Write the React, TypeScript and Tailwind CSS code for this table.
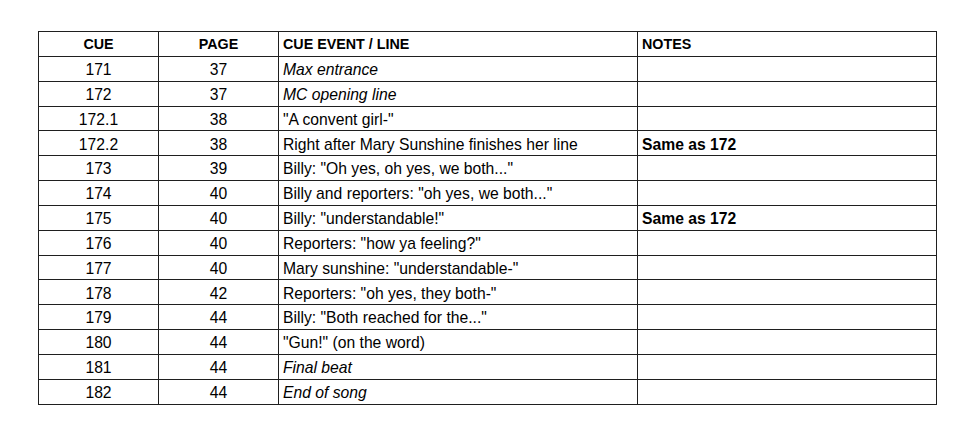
import React from "react";

type Row = { cue: string; page: string; event: string; italic?: boolean; notes?: string };

const rows: Row[] = [
  { cue: "171", page: "37", event: "Max entrance", italic: true },
  { cue: "172", page: "37", event: "MC opening line", italic: true },
  { cue: "172.1", page: "38", event: '"A convent girl-"' },
  { cue: "172.2", page: "38", event: "Right after Mary Sunshine finishes her line", notes: "Same as 172" },
  { cue: "173", page: "39", event: 'Billy: "Oh yes, oh yes, we both..."' },
  { cue: "174", page: "40", event: 'Billy and reporters: "oh yes, we both..."' },
  { cue: "175", page: "40", event: 'Billy: "understandable!"', notes: "Same as 172" },
  { cue: "176", page: "40", event: 'Reporters: "how ya feeling?"' },
  { cue: "177", page: "40", event: 'Mary sunshine: "understandable-"' },
  { cue: "178", page: "42", event: 'Reporters: "oh yes, they both-"' },
  { cue: "179", page: "44", event: 'Billy: "Both reached for the..."' },
  { cue: "180", page: "44", event: '"Gun!" (on the word)' },
  { cue: "181", page: "44", event: "Final beat", italic: true },
  { cue: "182", page: "44", event: "End of song", italic: true },
];

const cell = "h-[24.85px] border-r border-b border-[#1f1f1f] flex items-center pt-[2px] overflow-hidden whitespace-nowrap";

export default function App() {
  return (
    <div className="w-[980px] h-[440px] bg-white pt-[31px] pl-[38px]" style={{ fontFamily: '"Liberation Sans", Arial, sans-serif' }}>
      <div className="grid grid-cols-[120px_120px_359px_299px] w-[899px] border-l border-t border-[#1f1f1f] text-black">
        <div className={`${cell} justify-center font-bold text-[14.3px]`}>CUE</div>
        <div className={`${cell} justify-center font-bold text-[14.3px]`}>PAGE</div>
        <div className={`${cell} pl-[4px] font-bold text-[14.3px]`}>CUE EVENT / LINE</div>
        <div className={`${cell} pl-[4px] font-bold text-[14.3px]`}>NOTES</div>
        {rows.map((r) => (
          <React.Fragment key={r.cue}>
            <div className={`${cell} justify-center text-[15.7px]`}>{r.cue}</div>
            <div className={`${cell} justify-center text-[15.7px]`}>{r.page}</div>
            <div className={`${cell} pl-[4px] text-[15.7px] ${r.italic ? "italic" : ""}`}>{r.event}</div>
            <div className={`${cell} pl-[4px] text-[15.7px] font-bold`}>{r.notes ?? ""}</div>
          </React.Fragment>
        ))}
      </div>
    </div>
  );
}
